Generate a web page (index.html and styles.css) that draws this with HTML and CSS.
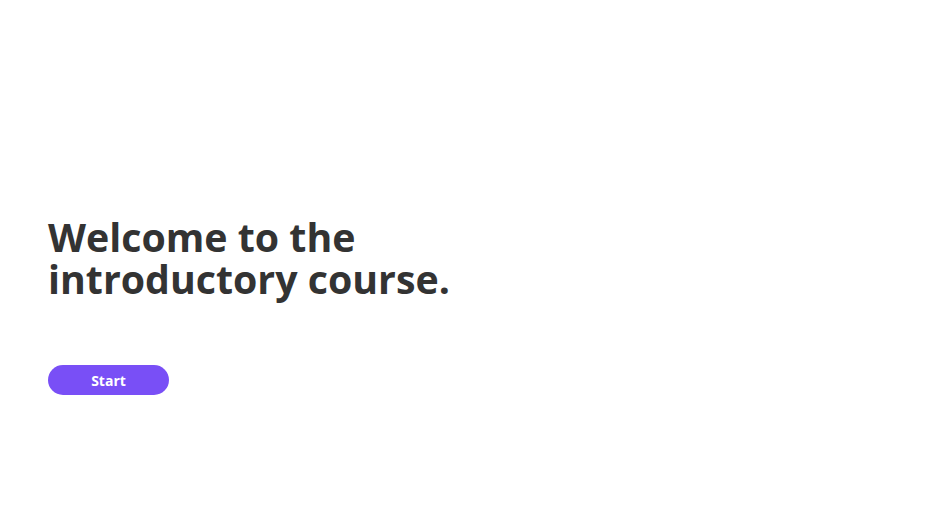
FILE: index.html
```html
<!DOCTYPE html>
<html lang="en">
<head>
<meta charset="utf-8">
<link rel="stylesheet" href="styles.css">
</head>
<body>
<main class="page">
  <section class="intro">
    <h1 class="title">Welcome to the<br>introductory course.</h1>
    <button class="start">Start</button>
  </section>
</main>
</body>
</html>
```
FILE: styles.css
```css
html, body {
  margin: 0;
  padding: 0;
  background: #ffffff;
}
.page {
  width: 940px;
  height: 528px;
  display: flex;
  align-items: flex-start;
  padding: 216px 48px 0;
  box-sizing: border-box;
  font-family: "Open Sans", "Liberation Sans", sans-serif;
}
.intro {
  display: flex;
  flex-direction: column;
  align-items: flex-start;
  gap: 65px;
}
.title {
  margin: 0;
  font-size: 39.3px;
  line-height: 42px;
  font-weight: 700;
  color: #333333;
}
.start {
  width: 121px;
  height: 30px;
  border: none;
  border-radius: 15px;
  background: #794ff6;
  color: #ffffff;
  font-family: "Open Sans", "Liberation Sans", sans-serif;
  font-weight: 700;
  font-size: 14px;
  padding: 0;
}
```
